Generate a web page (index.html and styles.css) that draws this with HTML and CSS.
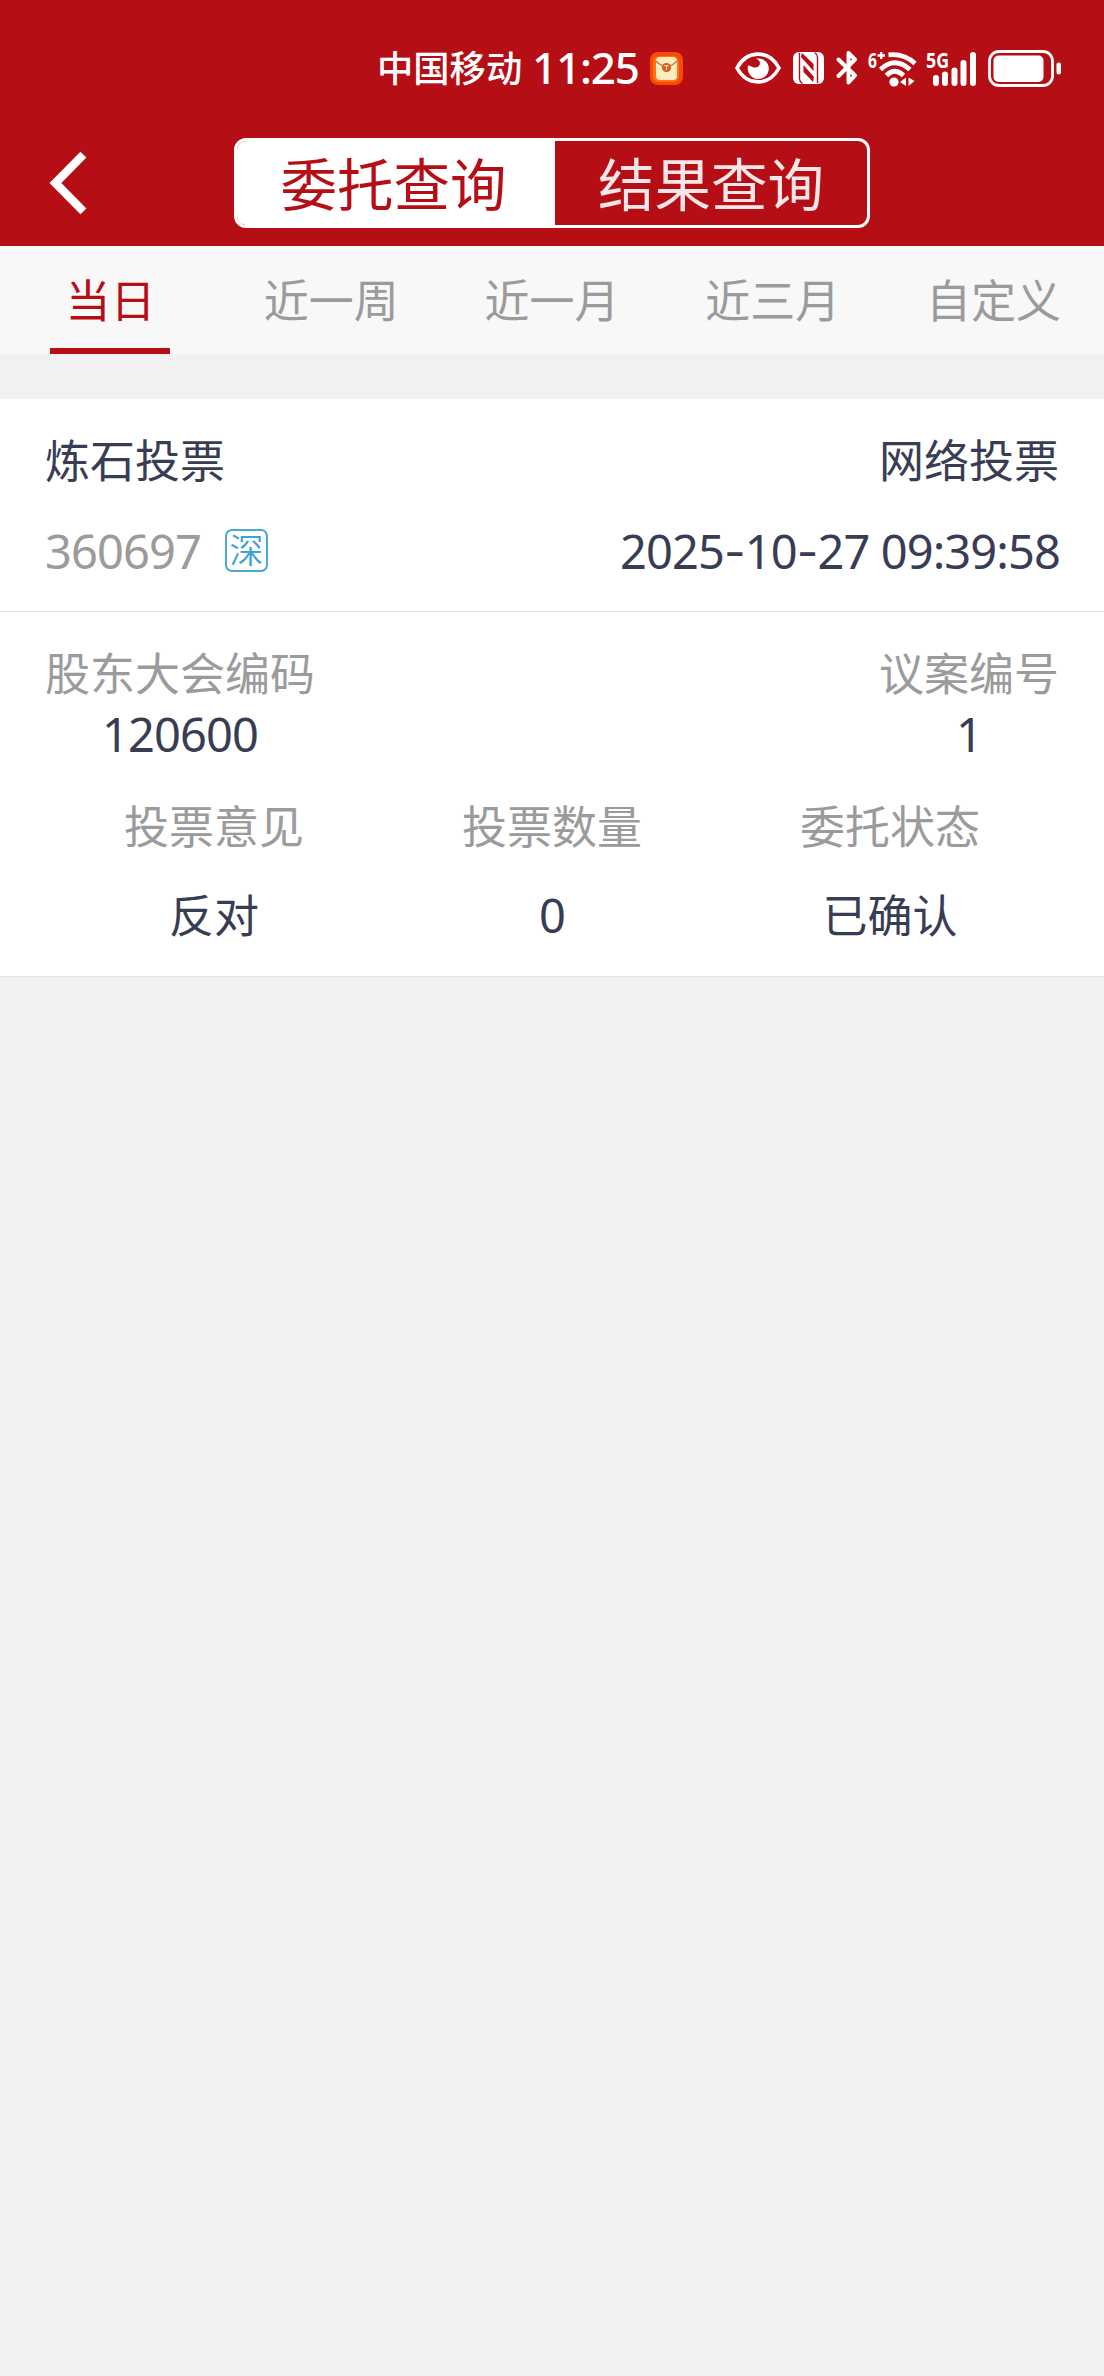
FILE: index.html
```html
<!DOCTYPE html>
<html lang="zh-CN">
<head>
  <meta charset="UTF-8">
  <meta name="viewport" content="width=device-width, initial-scale=1.0">
  <title>委托查询</title>
  <link rel="stylesheet" href="styles.css">
</head>
<body>
  <header class="header">
    <!-- Status bar -->
    <div class="status-bar">
      <span class="carrier">中国移动</span>
      <span class="clock">11:25</span>
      <svg class="app-icon" width="33" height="33" viewBox="0 0 33 33">
        <rect width="33" height="33" rx="8" fill="#fb4a08"/>
        <rect x="3" y="4" width="26" height="26" rx="6" fill="#ff7410"/>
        <rect x="6" y="5" width="21" height="23" rx="4" fill="#ffebc0"/>
        <path d="M6 9 Q16.5 20 27 9" fill="none" stroke="#b9804a" stroke-width="1.3"/>
        <circle cx="16.5" cy="15.5" r="4.6" fill="#d5601c"/>
        <path d="M14.3 13.7 H18.7 M16.5 13.7 V18" stroke="#ffe1a0" stroke-width="1.2"/>
      </svg>

      <div class="status-icons">
        <svg width="46" height="32" viewBox="0 0 46 32">
          <path d="M2 16 C12 -2.5 34 -2.5 44 16 C34 34.5 12 34.5 2 16 Z" fill="none" stroke="#fff" stroke-width="3.6"/>
          <path d="M21 6.8 C27 8 26 16.5 19 15.5 C16.5 15 15 13.5 13 13.6 C11.5 20 16 27 23 27 C29.5 27 33.8 22 33.8 16.5 C33.8 10 28 5.5 21 6.8 Z" fill="#fff"/>
        </svg>
        <svg class="nfc" width="31" height="32" viewBox="0 0 31 32">
          <rect width="31" height="32" rx="6" fill="#fff"/>
          <path d="M6.5 1 V27 Q6.5 29.5 9.5 31.5 M24.5 31 V5 Q24.5 2.5 21.5 0.5" fill="none" stroke="#b50f15" stroke-width="1.4"/>
          <path d="M10.5 13 L21 25 L20 30 L10.5 20 Z M20.5 19 L8 5 L9 1 L20.5 12 Z" fill="#b50f15"/>
        </svg>
        <svg class="bluetooth" width="23" height="36" viewBox="0 0 23 36">
          <path d="M2.5 9.5 L19 25.5 L12.5 32.5 V3 L19 9.5 L2.5 26" fill="none" stroke="#fff" stroke-width="4" stroke-linecap="round" stroke-linejoin="round"/>
        </svg>
        <svg class="wifi" width="50" height="37" viewBox="0 0 50 37">
          <text class="net-label" x="0" y="18" textLength="9" lengthAdjust="spacingAndGlyphs">6</text>
          <path d="M9.5 5.5 H17 M13.2 2 V9" stroke="#fff" stroke-width="2.4"/>
          <g fill="none" stroke="#fff" stroke-width="4.8">
            <path d="M20.5 4.8 Q36 3 47 13.5"/>
            <path d="M12.5 19.5 Q26.5 6 42 19.5"/>
            <path d="M18.500 25.500 Q26.500 17 35.500 25.500"/>
          </g>
          <circle cx="26" cy="32" r="4.6" fill="#fff"/>
          <path d="M38 27.5 V36 L32 32 Z M40.5 27.5 V36 L46.5 31 Z" fill="#fff"/>
        </svg>
        <svg class="signal" width="50" height="37" viewBox="0 0 50 37">
          <text class="net-label" x="0" y="18" textLength="23" lengthAdjust="spacingAndGlyphs">5G</text>
          <g fill="#fff">
            <rect x="7" y="25" width="6" height="11" rx="3"/>
            <rect x="16" y="21.5" width="6" height="14.5" rx="3"/>
            <rect x="25.5" y="17.5" width="6" height="18.5" rx="3"/>
            <rect x="34.5" y="10" width="6" height="26" rx="3"/>
            <rect x="44" y="2" width="6" height="34" rx="3"/>
          </g>
        </svg>
        <svg class="battery" width="73" height="37" viewBox="0 0 73 37">
          <rect x="1.5" y="1.5" width="63" height="34" rx="9.5" fill="none" stroke="#fff" stroke-width="2.8"/>
          <rect x="5.5" y="5.5" width="50" height="26.5" rx="5" fill="#fff"/>
          <rect x="68.5" y="12.5" width="4.5" height="12" rx="2" fill="#fff"/>
        </svg>
      </div>
    </div>

    <!-- Navigation -->
    <nav class="nav-bar">
      <svg class="back" width="42" height="66" viewBox="0 0 42 66">
        <path d="M36.4 4.6 L8.4 33 L36.4 61.4" fill="none" stroke="#fff" stroke-width="8.4"/>
      </svg>
      <div class="segment">
        <div class="segment-item selected">委托查询</div>
        <div class="segment-item">结果查询</div>
      </div>
    </nav>
  </header>

  <div class="tabs">
    <div class="tab active"><span>当日</span></div>
    <div class="tab"><span>近一周</span></div>
    <div class="tab"><span>近一月</span></div>
    <div class="tab"><span>近三月</span></div>
    <div class="tab"><span>自定义</span></div>
  </div>

  <div class="card">
    <div class="card-head">
      <div class="row">
        <span>炼石投票</span>
        <span>网络投票</span>
      </div>
      <div class="row">
        <div class="code">
          <span class="number gray">360697</span>
          <span class="market">深</span>
        </div>
        <span class="number time">2025<span class="dash">-</span>10<span class="dash">-</span>27 09:39:58</span>
      </div>
    </div>
    <div class="card-body">
      <div class="pair">
        <div class="field">
          <div class="label">股东大会编码</div>
          <div class="number">120600</div>
        </div>
        <div class="field">
          <div class="label">议案编号</div>
          <div class="number">1</div>
        </div>
      </div>
      <div class="grid">
        <div class="label">投票意见</div>
        <div class="label">投票数量</div>
        <div class="label">委托状态</div>
        <div class="value">反对</div>
        <div class="number">0</div>
        <div class="value">已确认</div>
      </div>
    </div>
  </div>
</body>
</html>
```

FILE: styles.css
```css
* {
  box-sizing: border-box;
}
body {
  margin: 0;
  min-height: 2376px;
  background-color: #f1f1f1;
  color: #383d54;
  font-family: "Noto Sans CJK SC", sans-serif;
  font-size: 45px;
}
svg {
  display: block;
  flex-shrink: 0;
  overflow: visible;
}
.header {
  height: 246px;
  background-color: #b50f15;
  color: #fff;
}
.status-bar {
  display: flex;
  align-items: center;
  height: 120px;
  padding: 16px 43px 0 377px;
}
.carrier {
  width: 146px;
  padding-bottom: 5px;
  font-size: 36.3px;
  font-weight: 500;
  line-height: 40px;
}
.clock {
  width: 113px;
  margin-left: 9px;
  padding-bottom: 3px;
  font-family: "Noto Sans", sans-serif;
  font-size: 44px;
  font-weight: 500;
  line-height: 40px;
  letter-spacing: -1.2px;
}
.app-icon {
  margin-left: 5px;
}
.status-icons {
  display: flex;
  align-items: center;
  margin-left: auto;
}
.nfc {
  margin-left: 12px;
}
.bluetooth {
  margin-left: 12px;
}
.wifi {
  margin-left: 9px;
}
.signal {
  margin-left: 8px;
}
.battery {
  margin-left: 12px;
}
.net-label {
  fill: #fff;
  font-family: "Noto Sans", sans-serif;
  font-size: 22px;
  font-weight: 700;
}
.nav-bar {
  display: flex;
  align-items: center;
  height: 126px;
  padding-left: 47px;
}
.segment {
  display: flex;
  width: 636px;
  height: 90px;
  margin-left: 145px;
  border: 3px solid #fff;
  border-radius: 12px;
  overflow: hidden;
}
.segment-item {
  flex: 1;
  font-size: 56.5px;
  line-height: 80px;
  text-align: center;
  color: #f6e6e7;
}
.segment-item.selected {
  flex: 0 0 318px;
  padding-right: 5px;
  background-color: #fff;
  color: #b50f15;
}
.tabs {
  display: flex;
  height: 108px;
  background-color: #f8f8f8;
  color: #9b9b9b;
}
.tab {
  display: flex;
  flex: 1;
  justify-content: center;
}
.tab span {
  line-height: 106px;
}
.tab.active span {
  width: 120px;
  border-bottom: 6px solid #b50f15;
  color: #b50f15;
  text-align: center;
}
.card {
  margin-top: 45px;
  background-color: #fff;
  border-bottom: 1px solid #e2e2e2;
}
.card-head {
  height: 213px;
  padding: 13px 45px 0;
  border-bottom: 1px solid #e2e2e2;
}
.row {
  display: flex;
  justify-content: space-between;
  align-items: center;
  height: 92px;
}
.code {
  display: flex;
  align-items: center;
}
.number {
  font-family: "Noto Sans", sans-serif;
  font-size: 47px;
  letter-spacing: -0.9px;
}
.row .number {
  padding-top: 2px;
}
.time {
  margin-right: -1px;
}
.dash {
  font-family: Inter, sans-serif;
}
.gray,
.label {
  color: #9b9b9b;
}
.market {
  width: 43px;
  height: 43px;
  margin-left: 24px;
  border: 2px solid #4aa9d8;
  border-radius: 7px;
  color: #3ba3da;
  font-size: 34px;
  font-weight: 350;
  line-height: 36px;
  text-align: center;
}
.card-body {
  height: 364px;
  padding: 29px 45px 0;
}
.pair {
  display: flex;
  justify-content: space-between;
}
.field {
  line-height: 62px;
  text-align: center;
}
.grid {
  display: grid;
  grid-template-columns: repeat(3, 1fr);
  margin-top: 14px;
  line-height: 91px;
  text-align: center;
}
.value {
  line-height: 88px;
}
```
